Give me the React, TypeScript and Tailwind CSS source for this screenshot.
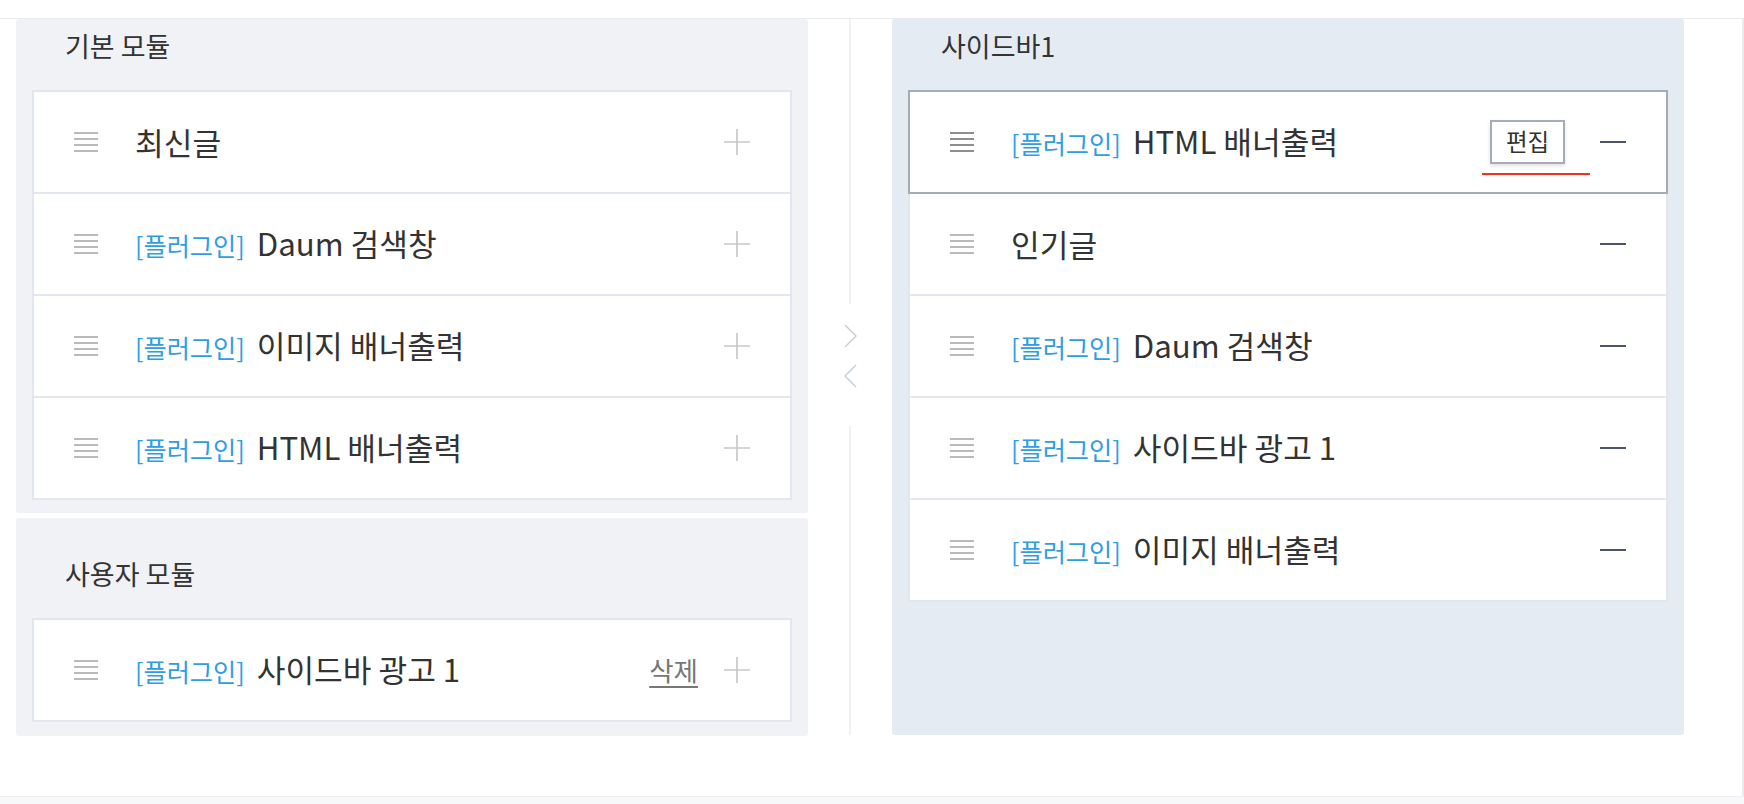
import type { FC } from "react";

// ---------------------------------------------------------------------------
// Sidebar module editor – two column drag lists
// ---------------------------------------------------------------------------

interface Item {
  label?: string;
  name: string;
  deletable?: boolean;
}

const BASIC: Item[] = [
  { name: "최신글" },
  { label: "[플러그인]", name: "Daum 검색창" },
  { label: "[플러그인]", name: "이미지 배너출력" },
  { label: "[플러그인]", name: "HTML 배너출력" },
];

const CUSTOM: Item[] = [
  { label: "[플러그인]", name: "사이드바 광고 1", deletable: true },
];

const SIDEBAR: Item[] = [
  { label: "[플러그인]", name: "HTML 배너출력" },
  { name: "인기글" },
  { label: "[플러그인]", name: "Daum 검색창" },
  { label: "[플러그인]", name: "사이드바 광고 1" },
  { label: "[플러그인]", name: "이미지 배너출력" },
];

const Handle: FC<{ dark?: boolean }> = ({ dark }) => (
  <span className="flex w-6 shrink-0 flex-col gap-1">
    {[0, 1, 2, 3].map((i) => (
      <span
        key={i}
        className={`block h-0.5 w-full ${dark ? "bg-[#8f8f8f]" : "bg-[#bababa]"}`}
      />
    ))}
  </span>
);

const PlusIcon = () => (
  <svg width="26" height="26" viewBox="0 0 26 26" className="shrink-0">
    <path d="M13 0v26M0 13h26" stroke="#c8c8c8" strokeWidth="1.7" />
  </svg>
);

const MinusIcon = () => (
  <span className="flex h-[26px] w-[26px] shrink-0 items-center">
    <span className="block h-0.5 w-full bg-[#4b5565]" />
  </span>
);

const Row: FC<{ item: Item; side: "add" | "remove"; selected?: boolean; first?: boolean }> = ({
  item,
  side,
  selected = false,
  first = false,
}) => (
  <div
    className={`flex h-[104px] items-center border-2 bg-white pl-[40px] pr-[40px] ${
      first ? "" : "-mt-[2px]"
    } ${selected ? "relative z-10 border-[#a4acba]" : "border-[#e2e6ee]"}`}
  >
    <Handle dark={selected} />
    <div className="ml-[37px] flex flex-1 items-baseline">
      {item.label && (
        <span className="mr-[12px] text-[25.2px] leading-[42px] text-[#2f9de4]">
          {item.label}
        </span>
      )}
      <span className="text-[31.2px] leading-[42px] text-[#333333]">{item.name}</span>
    </div>
    {item.deletable && (
      <span className="mr-[26px] text-[26.5px] leading-[42px] text-[#777777] underline underline-offset-[5px]">
        삭제
      </span>
    )}
    {selected && (
      <div className="relative mr-[35px]">
        <button
          type="button"
          className="flex h-[44px] w-[75px] items-center justify-center border-2 border-[#a4acba] bg-white text-[23.5px] text-[#333333] shadow-[0_2px_4px_rgba(0,0,0,0.12)]"
        >
          편집
        </button>
        <span className="absolute -left-[8px] top-[53px] block h-[2px] w-[108px] bg-[#f5301e]" />
      </div>
    )}
    {side === "add" ? <PlusIcon /> : <MinusIcon />}
  </div>
);

const Panel: FC<{
  title: string;
  items: Item[];
  side: "add" | "remove";
  className: string;
  selectedIndex?: number;
}> = ({ title, items, side, className, selectedIndex = -1 }) => (
  <section className={`flex flex-col rounded-[3px] px-[16px] ${className}`}>
    <h2 className="pl-[33px] text-[27px] leading-[36px] text-[#333333]">{title}</h2>
    <div className="mt-[26px] flex flex-col">
      {items.map((item, i) => (
        <Row
          key={i}
          item={item}
          side={side}
          first={i === 0}
          selected={i === selectedIndex}
        />
      ))}
    </div>
  </section>
);

const Chevron: FC<{ dir: "right" | "left" }> = ({ dir }) => (
  <svg width="13" height="24" viewBox="0 0 13 24">
    <path
      d={dir === "right" ? "M1 1l11 11L1 23" : "M12 1L1 12l11 11"}
      fill="none"
      stroke="#c6d0dd"
      strokeWidth="1.5"
    />
  </svg>
);

export default function App() {
  return (
    <div className="flex h-[804px] w-full flex-col overflow-hidden bg-white font-['Noto_Sans_CJK_KR','Noto_Sans',sans-serif]">
      <div className="h-[18px] shrink-0" />
      <main className="flex flex-1 items-start border-r-2 border-t border-[#e9ebef] pl-[16px]">
        {/* left column */}
        <div className="flex w-[792px] flex-col gap-[5px]">
          <Panel
            title="기본 모듈"
            items={BASIC}
            side="add"
            className="h-[494px] bg-[#f0f2f6] pt-[9px]"
          />
          <Panel
            title="사용자 모듈"
            items={CUSTOM}
            side="add"
            className="h-[218px] bg-[#f0f2f6] pt-[38px]"
          />
        </div>

        {/* move arrows */}
        <div className="flex h-[716px] w-[84px] flex-col items-center">
          <div className="h-[285px] w-[2px] bg-[#eff1f4]" />
          <div className="flex flex-col items-center gap-[16px] pb-[38px] pt-[20px]">
            <Chevron dir="right" />
            <Chevron dir="left" />
          </div>
          <div className="w-[2px] flex-1 bg-[#eff1f4]" />
        </div>

        {/* sidebar column */}
        <Panel
          title="사이드바1"
          items={SIDEBAR}
          side="remove"
          selectedIndex={0}
          className="h-[716px] w-[792px] bg-[#e5ebf3] pt-[9px]"
        />
      </main>
      <div className="h-[8px] shrink-0 border-t border-[#eceef1] bg-[#f7f8fa]" />
    </div>
  );
}
